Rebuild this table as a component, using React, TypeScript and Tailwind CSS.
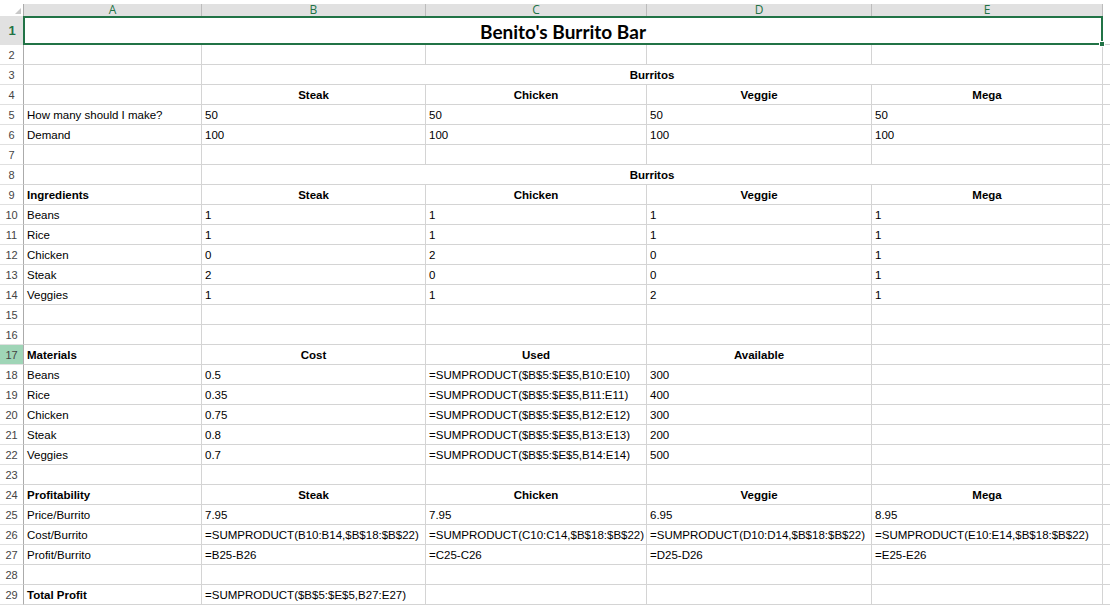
import React from 'react';

type RowDef = {
  n: number;
  cells?: string[];
  head?: boolean;
  boldFirst?: boolean;
  merged?: string;
};

const colWidths = ['w-[178px]', 'w-[224px]', 'w-[221px]', 'w-[225px]', 'w-[231px]'];
const letters = ['A', 'B', 'C', 'D', 'E'];

const burritos = ['Steak', 'Chicken', 'Veggie', 'Mega'];

const rows: RowDef[] = [
  { n: 2 },
  { n: 3, merged: 'Burritos' },
  { n: 4, cells: ['', ...burritos], head: true },
  { n: 5, cells: ['How many should I make?', '50', '50', '50', '50'] },
  { n: 6, cells: ['Demand', '100', '100', '100', '100'] },
  { n: 7 },
  { n: 8, merged: 'Burritos' },
  { n: 9, cells: ['Ingredients', ...burritos], head: true },
  { n: 10, cells: ['Beans', '1', '1', '1', '1'] },
  { n: 11, cells: ['Rice', '1', '1', '1', '1'] },
  { n: 12, cells: ['Chicken', '0', '2', '0', '1'] },
  { n: 13, cells: ['Steak', '2', '0', '0', '1'] },
  { n: 14, cells: ['Veggies', '1', '1', '2', '1'] },
  { n: 15 },
  { n: 16 },
  { n: 17, cells: ['Materials', 'Cost', 'Used', 'Available', ''], head: true },
  { n: 18, cells: ['Beans', '0.5', '=SUMPRODUCT($B$5:$E$5,B10:E10)', '300', ''] },
  { n: 19, cells: ['Rice', '0.35', '=SUMPRODUCT($B$5:$E$5,B11:E11)', '400', ''] },
  { n: 20, cells: ['Chicken', '0.75', '=SUMPRODUCT($B$5:$E$5,B12:E12)', '300', ''] },
  { n: 21, cells: ['Steak', '0.8', '=SUMPRODUCT($B$5:$E$5,B13:E13)', '200', ''] },
  { n: 22, cells: ['Veggies', '0.7', '=SUMPRODUCT($B$5:$E$5,B14:E14)', '500', ''] },
  { n: 23 },
  { n: 24, cells: ['Profitability', ...burritos], head: true },
  { n: 25, cells: ['Price/Burrito', '7.95', '7.95', '6.95', '8.95'] },
  {
    n: 26,
    cells: [
      'Cost/Burrito',
      '=SUMPRODUCT(B10:B14,$B$18:$B$22)',
      '=SUMPRODUCT(C10:C14,$B$18:$B$22)',
      '=SUMPRODUCT(D10:D14,$B$18:$B$22)',
      '=SUMPRODUCT(E10:E14,$B$18:$B$22)',
    ],
  },
  { n: 27, cells: ['Profit/Burrito', '=B25-B26', '=C25-C26', '=D25-D26', '=E25-E26'] },
  { n: 28 },
  { n: 29, cells: ['Total Profit', '=SUMPRODUCT($B$5:$E$5,B27:E27)', '', '', ''], boldFirst: true },
];

const cellBase =
  'h-[20px] shrink-0 border-r border-b border-[#d4d4d4] px-[3px] pt-[2px] flex items-center whitespace-nowrap overflow-hidden';

const RowHeader: React.FC<{ n: number }> = ({ n }) => (
  <div
    className={`w-[24px] h-[20px] shrink-0 border-r border-r-[#ababab] border-b border-b-[#e0e0e0] flex items-center justify-center pt-px text-[11px] text-[#444] ${
      n === 17 ? 'bg-[#9fd5b7]' : 'bg-white'
    }`}
  >
    {n}
  </div>
);

const SheetRow: React.FC<{ row: RowDef }> = ({ row }) => {
  const { n, cells, head, boldFirst, merged } = row;
  return (
    <div className="flex">
      <RowHeader n={n} />
      {merged ? (
        <>
          <div className={`${cellBase} ${colWidths[0]}`} />
          <div className={`${cellBase} w-[901px] justify-center font-bold`}>{merged}</div>
        </>
      ) : (
        colWidths.map((w, i) => {
          const text = cells ? cells[i] : '';
          const centered = head && i > 0;
          const bold = head || (boldFirst && i === 0);
          return (
            <div
              key={i}
              className={`${cellBase} ${w} ${centered ? 'justify-center' : ''} ${
                bold ? 'font-bold' : ''
              }`}
            >
              {text}
            </div>
          );
        })
      )}
      <div className="h-[20px] flex-1 border-b border-[#d4d4d4]" />
    </div>
  );
};

const App: React.FC = () => {
  return (
    <div
      className="w-[1110px] h-[609px] overflow-hidden bg-white text-[11.5px] text-black pt-[4px]"
      style={{ fontFamily: '"Liberation Sans", Arial, sans-serif' }}
    >
      {/* column headers */}
      <div className="flex h-[12px]">
        <div className="w-[24px] shrink-0 bg-white border-r border-[#ababab] relative">
          <div className="absolute right-[2px] bottom-[2px] w-0 h-0 border-l-[6px] border-l-transparent border-b-[6px] border-b-[#c8c8c8]" />
        </div>
        {colWidths.map((w, i) => (
          <div
            key={letters[i]}
            className={`${w} shrink-0 bg-[#e1e1e1] border-r border-[#bcbcbc] flex items-center justify-center text-[12px] leading-none text-[#217346]`}
            style={{ fontFamily: '"Open Sans", sans-serif' }}
          >
            {letters[i]}
          </div>
        ))}
        <div className="flex-1 bg-white" />
      </div>

      {/* row 1 title */}
      <div className="flex h-[29px]">
        <div className="w-[24px] shrink-0 bg-[#e1e1e1] flex items-center justify-center text-[13px] text-[#217346] font-semibold">
          1
        </div>
        <div className="relative w-[1080px] shrink-0 border-2 border-[#217346] -ml-px flex items-center justify-center pt-[2px]">
          <span
            className="text-[19px] font-bold leading-none"
            style={{ fontFamily: 'Lato, "Open Sans", sans-serif' }}
          >
            Benito's Burrito Bar
          </span>
          <div className="absolute -right-[4px] -bottom-[4px] w-[6px] h-[6px] bg-[#217346] border border-white" />
        </div>
        <div className="flex-1 border-b border-[#d4d4d4]" />
      </div>

      {rows.map((r) => (
        <SheetRow key={r.n} row={r} />
      ))}
    </div>
  );
};

export default App;
